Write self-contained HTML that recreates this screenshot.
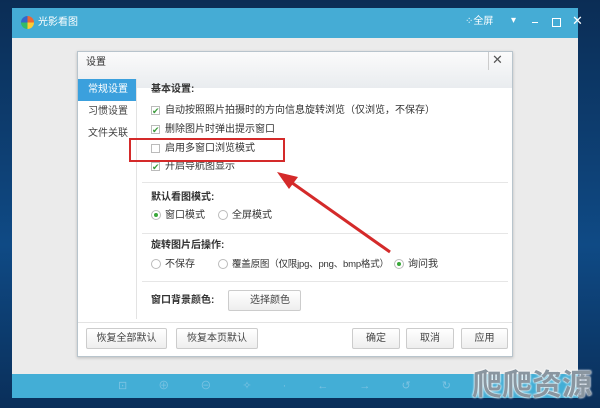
<!DOCTYPE html>
<html><head><meta charset="utf-8"><style>
*{margin:0;padding:0;box-sizing:border-box}
body{width:600px;height:408px;overflow:hidden;position:relative;background:linear-gradient(180deg,#0b2d55,#0f4a85 60%,#0a2f5a);font-family:"Liberation Sans","Noto Sans CJK SC",sans-serif;font-size:10px;color:#333}
.abs{position:absolute}
.win{left:12px;top:8px;width:566px;height:390px;background:#ebebeb}
.tb{left:12px;top:8px;width:566px;height:30px;background:#45acd5;color:#fff}
.bb{left:12px;top:374px;width:566px;height:24px;background:#43aed6}
.dlg{left:77px;top:51px;width:436px;height:306px;background:#fff;border:1px solid #b8c4cc;box-shadow:0 1px 3px rgba(0,0,0,.2)}
.hd{left:0;top:0;width:434px;height:36px;background:linear-gradient(#fbfbfb,#e9ecef)}
.t{position:absolute;white-space:nowrap;line-height:12px}
.cb{position:absolute;width:9px;height:9px;border:1px solid #bbb;background:#fff;font-size:9px;line-height:8px;color:#3a9a3a;text-align:center}
.rd{position:absolute;width:10px;height:10px;border:1px solid #bbb;border-radius:50%;background:#fff}
.rd.on::after{content:"";position:absolute;left:2px;top:2px;width:4px;height:4px;border-radius:50%;background:#3aa83a}
.btn{position:absolute;height:21px;border:1px solid #ccc;border-radius:2px;background:linear-gradient(#fff,#eee);text-align:center;line-height:19px;font-size:10px;color:#444}
.sp{position:absolute;left:64px;width:366px;height:1px;background:#e6e6e6}
</style></head><body>
<div class="abs win"></div>
<div class="abs tb">
 <div class="abs" style="left:9px;top:8px;width:13px;height:13px;border-radius:50%;background:conic-gradient(#e63 0 25%,#fc3 0 50%,#3b6 0 75%,#36c 0)"></div>
 <div class="t" style="left:26px;top:9px;color:#fff">光影看图</div>
 <div class="t" style="left:453px;top:8px;color:#fff">⁘全屏</div>
 <div class="t" style="left:499px;top:7px;color:#fff">▾</div>
 <div class="abs" style="left:520px;top:14px;width:6px;height:1px;background:#fff"></div>
 <div class="abs" style="left:540px;top:10px;width:9px;height:9px;border:1.5px solid #fff"></div>
 <div class="t" style="left:560px;top:7px;color:#fff;font-size:13px">✕</div>
</div>
<div class="abs dlg">
 <div class="abs hd"></div>
 <div class="t" style="left:8px;top:5px">设置</div>
 <div class="abs" style="left:410px;top:0;width:1px;height:18px;background:#ccc"></div>
 <div class="t" style="left:414px;top:2px;font-size:13px;color:#555">✕</div>
 <div class="abs" style="left:0;top:27px;width:58px;height:22px;background:#3ba0dd"></div>
 <div class="t" style="left:10px;top:32px;color:#fff">常规设置</div>
 <div class="t" style="left:10px;top:54px;color:#444">习惯设置</div>
 <div class="t" style="left:10px;top:76px;color:#444">文件关联</div>
 <div class="abs" style="left:58px;top:27px;width:1px;height:240px;background:#e3e3e3"></div>
 <div class="t" style="left:73px;top:32px;font-weight:bold">基本设置:</div>
 <div class="cb" style="left:73px;top:54px">✔</div><div class="t" style="left:87px;top:53px">自动按照照片拍摄时的方向信息旋转浏览（仅浏览，不保存）</div>
 <div class="cb" style="left:73px;top:73px">✔</div><div class="t" style="left:87px;top:72px">删除图片时弹出提示窗口</div>
 <div class="cb" style="left:73px;top:92px"></div><div class="t" style="left:87px;top:91px">启用多窗口浏览模式</div>
 <div class="cb" style="left:73px;top:110px">✔</div><div class="t" style="left:87px;top:109px">开启导航图显示</div>
 <div class="abs" style="left:51px;top:86px;width:156px;height:24px;border:2px solid #d42a2a"></div>
 <div class="sp" style="top:130px"></div>
 <div class="t" style="left:73px;top:140px;font-weight:bold">默认看图模式:</div>
 <div class="rd on" style="left:73px;top:158px"></div><div class="t" style="left:87px;top:158px">窗口模式</div>
 <div class="rd" style="left:140px;top:158px"></div><div class="t" style="left:154px;top:158px">全屏模式</div>
 <div class="sp" style="top:181px"></div>
 <div class="t" style="left:73px;top:188px;font-weight:bold">旋转图片后操作:</div>
 <div class="rd" style="left:73px;top:207px"></div><div class="t" style="left:87px;top:207px">不保存</div>
 <div class="rd" style="left:140px;top:207px"></div><div class="t" style="left:154px;top:207px;font-size:9.5px;letter-spacing:-0.2px">覆盖原图（仅限jpg、png、bmp格式）</div>
 <div class="rd on" style="left:316px;top:207px"></div><div class="t" style="left:330px;top:207px">询问我</div>
 <div class="sp" style="top:229px"></div>
 <div class="t" style="left:73px;top:243px;font-weight:bold">窗口背景颜色:</div>
 <div class="btn" style="left:150px;top:238px;width:73px;height:21px;text-align:right;padding-right:10px">选择颜色</div>
 <div class="abs" style="left:0;top:270px;width:434px;height:1px;background:#e3e3e3"></div>
 <div class="btn" style="left:8px;top:276px;width:81px">恢复全部默认</div>
 <div class="btn" style="left:98px;top:276px;width:82px">恢复本页默认</div>
 <div class="btn" style="left:274px;top:276px;width:48px">确定</div>
 <div class="btn" style="left:328px;top:276px;width:48px">取消</div>
 <div class="btn" style="left:383px;top:276px;width:47px">应用</div>
</div>
<svg class="abs" style="left:0;top:0" width="600" height="408">
 <line x1="390" y1="252" x2="288" y2="180" stroke="#d42a2a" stroke-width="3"/>
 <polygon points="277,172 298,177 289,189" fill="#d42a2a"/>
</svg>
<div class="abs bb"></div>
<div class="t" style="left:118px;top:380px;color:#7cc3e2;font-size:11px;letter-spacing:14px">⊡ ⊕ ⊖ ✧ · ← → ↺ ↻ 🗑</div>
<div class="t" style="left:472px;top:368px;font-size:30px;line-height:36px;color:#8a96a0;font-weight:bold;text-shadow:0 0 2px #fff,0 0 2px #fff">爬爬资源</div>
</body></html>
